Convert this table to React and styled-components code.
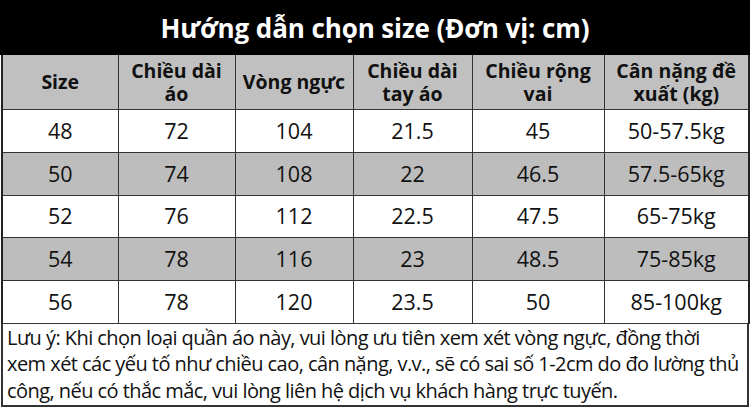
import React from "react";
import styled, { createGlobalStyle } from "styled-components";

const GlobalStyle = createGlobalStyle`
  html, body {
    margin: 0;
    padding: 0;
    background: #fff;
  }
  body {
    font-family: "Open Sans", "Noto Sans", sans-serif;
    color: #111;
  }
`;

const Page = styled.div`
  width: 750px;
  height: 409px;
  box-sizing: border-box;
  padding: 0 1px 2px 1px;
  display: flex;
  flex-direction: column;
`;

const Title = styled.h1`
  margin: 0 -1px;
  height: 55px;
  flex-shrink: 0;
  background: #000;
  color: #fff;
  font-size: 26px;
  font-weight: 700;
  display: flex;
  align-items: center;
  justify-content: center;
  letter-spacing: -0.1px;
`;

const Table = styled.table`
  width: 100%;
  flex-shrink: 0;
  border-collapse: collapse;
  table-layout: fixed;
  border-left: 2px solid #222;
  border-right: 2px solid #222;
`;

const HeadCell = styled.th`
  height: 54px;
  padding: 0;
  background: #c0c0c0;
  font-size: 19.5px;
  font-weight: 700;
  line-height: 23.5px;
  text-align: center;
  border: 1.5px solid #333;
  border-top: none;
  color: #111;
  white-space: nowrap;
`;

const Row = styled.tr`
  background: ${(p) => (p.$shaded ? "#bdbdbd" : "#fff")};
`;

const Cell = styled.td`
  height: 41.8px;
  padding: 0;
  font-size: 21.5px;
  line-height: 26px;
  text-align: center;
  border: 1.5px solid #333;
  color: #111;
`;

const Note = styled.div`
  flex: 1;
  box-sizing: border-box;
  border: 2px solid #333;
  border-top: none;
  padding: 1px 0 0 4px;
  font-size: 20px;
  line-height: 26.5px;
  color: #111;
  letter-spacing: -0.55px;
  white-space: nowrap;
  overflow: hidden;
`;

const columns = [
  { w: 116, label: "Size" },
  { w: 117, label: ["Chiều dài", "áo"] },
  { w: 118, label: "Vòng ngực" },
  { w: 119, label: ["Chiều dài", "tay áo"] },
  { w: 132, label: ["Chiều rộng", "vai"] },
  { w: 145, label: ["Cân nặng đề", "xuất (kg)"] },
];

const rows = [
  ["48", "72", "104", "21.5", "45", "50-57.5kg"],
  ["50", "74", "108", "22", "46.5", "57.5-65kg"],
  ["52", "76", "112", "22.5", "47.5", "65-75kg"],
  ["54", "78", "116", "23", "48.5", "75-85kg"],
  ["56", "78", "120", "23.5", "50", "85-100kg"],
];

const noteLines = [
  "Lưu ý: Khi chọn loại quần áo này, vui lòng ưu tiên xem xét vòng ngực, đồng thời",
  "xem xét các yếu tố như chiều cao, cân nặng, v.v., sẽ có sai số 1-2cm do đo lường thủ",
  "công, nếu có thắc mắc, vui lòng liên hệ dịch vụ khách hàng trực tuyến.",
];

const App = () => {
  return (
    <>
      <GlobalStyle />
      <Page>
        <Title>Hướng dẫn chọn size (Đơn vị: cm)</Title>
        <Table>
          <colgroup>
            {columns.map((c, i) => (
              <col key={i} style={{ width: c.w }} />
            ))}
          </colgroup>
          <thead>
            <tr>
              {columns.map((c, i) => (
                <HeadCell key={i}>
                  {Array.isArray(c.label) ? (
                    <>
                      {c.label[0]}
                      <br />
                      {c.label[1]}
                    </>
                  ) : (
                    c.label
                  )}
                </HeadCell>
              ))}
            </tr>
          </thead>
          <tbody>
            {rows.map((r, i) => (
              <Row key={i} $shaded={i % 2 === 1}>
                {r.map((v, j) => (
                  <Cell key={j}>{v}</Cell>
                ))}
              </Row>
            ))}
          </tbody>
        </Table>
        <Note>
          {noteLines.map((line, i) => (
            <div key={i}>{line}</div>
          ))}
        </Note>
      </Page>
    </>
  );
};

export default App;
